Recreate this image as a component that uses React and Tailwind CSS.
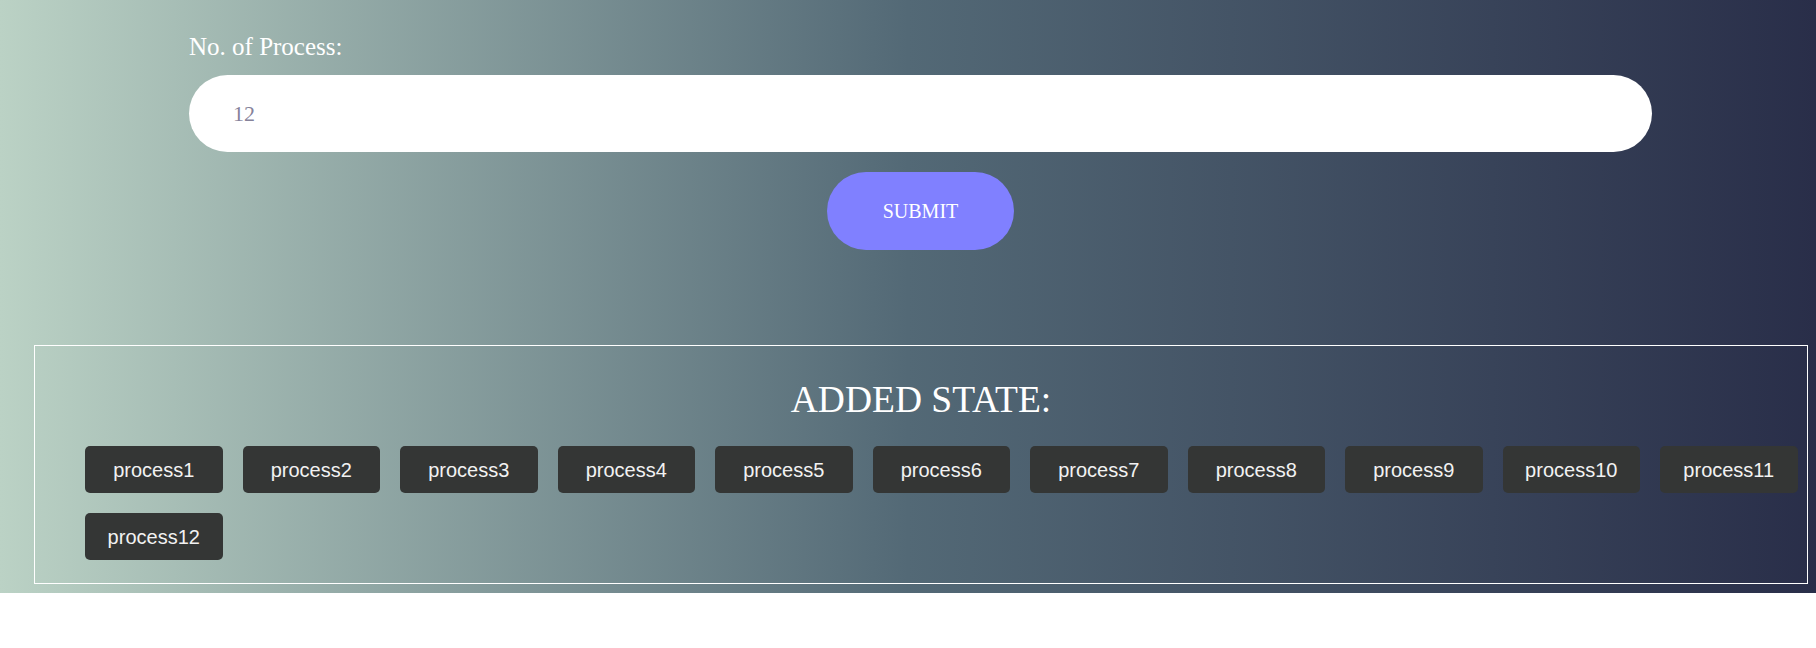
const processes = Array.from({ length: 12 }, (_, i) => `process${i + 1}`);

export default function App() {
  return (
    <div className="bg-[linear-gradient(to_right,#bbd2c5,#536976,#292e49)] pb-[9px] font-['Liberation_Serif','Times_New_Roman',serif]">
      <div className="ml-[189px] w-[1463px] pt-[32px] flex flex-col">
        <label className="text-[25px] leading-[29px] text-white">No. of Process:</label>
        <input
          type="text"
          readOnly
          value="12"
          className="mt-[14px] h-[77px] w-full rounded-full bg-white pl-[44px] text-[22px] text-[#86829a] outline-none"
        />
        <button className="mt-[20px] self-center h-[78px] w-[187px] rounded-full bg-[#8080ff] text-[20px] text-white">
          SUBMIT
        </button>
      </div>

      <div className="mt-[95px] ml-[34px] w-[1774px] border border-white pt-[33px] pb-[23px]">
        <h2 className="text-center text-[37.5px] leading-[42px] text-white">ADDED STATE:</h2>
        <div className="mt-[25px] pl-[50px] flex flex-wrap gap-[20px]">
          {processes.map((p) => (
            <div
              key={p}
              className="w-[137.5px] h-[47px] flex items-center justify-center rounded-[5px] bg-[#343635] text-[20px] text-[#f2f2f2] font-['Liberation_Sans',Arial,sans-serif]"
            >
              {p}
            </div>
          ))}
        </div>
      </div>
    </div>
  );
}
